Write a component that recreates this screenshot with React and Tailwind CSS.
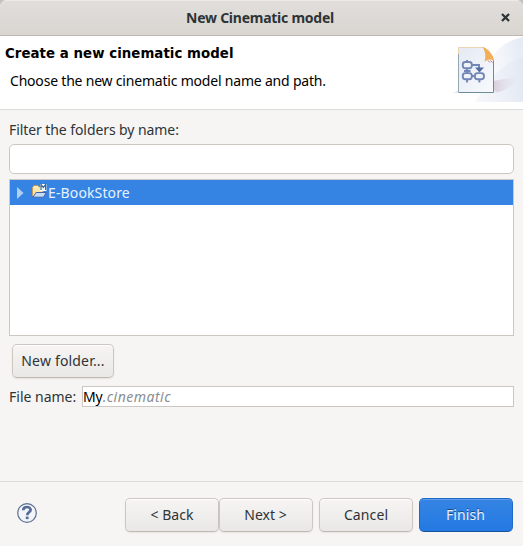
import React from "react";

const BUTTON =
  "box-border flex h-[34px] shrink-0 items-center justify-center rounded-[5px] border border-[#cdc7c2] border-b-[#bfb8b1] bg-linear-to-b from-[#f6f5f4] to-[#e9e8e6] text-[#2e3436] shadow-[inset_0_1px_#ffffff,0_1px_2px_rgba(0,0,0,0.07)]";

function WizardBanner() {
  return (
    <svg width="78" height="66" viewBox="0 0 78 66" className="block shrink-0">
      <defs>
        <linearGradient id="sweep" x1="0" y1="0.5" x2="1" y2="0.3">
          <stop offset="0.2" stopColor="#fff" />
          <stop offset="0.7" stopColor="#f3f5fa" />
          <stop offset="1" stopColor="#e6ebf5" />
        </linearGradient>
        <linearGradient id="lower" x1="0" y1="0" x2="1" y2="0">
          <stop offset="0" stopColor="#f5f6fa" />
          <stop offset="1" stopColor="#e1e7f3" />
        </linearGradient>
        <linearGradient id="page" x1="0" y1="0" x2="1" y2="1">
          <stop offset="0" stopColor="#e4e9f3" />
          <stop offset="1" stopColor="#f8fafd" />
        </linearGradient>
        <linearGradient id="shade" x1="0" y1="0" x2="1" y2="0">
          <stop offset="0" stopColor="#d8ccd8" />
          <stop offset="1" stopColor="#e7eaf4" stopOpacity="0" />
        </linearGradient>
      </defs>
      <path d="M78 1C62 4 53 12 44 25C34 41 22 51 8 57L16 66H78Z" fill="url(#sweep)" />
      <path d="M78 21C63 25 52 35 42 48L30 66H78Z" fill="url(#lower)" opacity="0.75" />
      <path d="M48 45L77 40C69 50 59 56 48 57Z" fill="url(#shade)" />
      <path d="M8 57L14 54H49L54 57Z" fill="#e5e8f1" />
      <path d="M13 11H39L49 24V57H13Z" fill="url(#page)" />
      <path d="M13.5 56V11.5H39" fill="none" stroke="#e9d6b0" />
      <path d="M48.5 24V56.5H13.5" fill="none" stroke="#6d8b98" />
      <path d="M13.5 18V56" fill="none" stroke="#93a8b1" />
      <path d="M37.5 11C42 11.5 49 19 49 25C46 23 43 23 39.5 26C41 20 40.5 16 37.5 11Z" fill="#f5ae58" />
      <path d="M43 24.5L45 26.5M45.5 24.5L47.5 26.5" stroke="#ce7474" />
      <g fill="#eef2f9" stroke="#7186b5" strokeWidth="1.9">
        <path d="M22 24V27M22 33V37M22 43V46.5M27 29H34V33M34.4 43V46.5M19 35H25.5M25.5 40H30" fill="none" />
        <rect x="17.8" y="26" width="9" height="6.2" rx="2.5" />
        <rect x="17.8" y="37.1" width="9" height="6.2" rx="2.5" />
        <rect x="29.9" y="37.1" width="9" height="6.2" rx="2.5" />
      </g>
      <path d="M30 31.5H39L34.5 36.5Z" fill="#536da5" />
    </svg>
  );
}

function ProjectIcon() {
  return (
    <svg width="16" height="16" viewBox="0 0 16 16" className="block shrink-0">
      <path d="M1.5 13V4.5L3 2.5H7L8 4H12V12" fill="#fff0be" stroke="#c7975c" />
      <path d="M3 5H11V9H5L2 13Z" fill="#fce6a8" />
      <path d="M5 9.5H15.3L12.5 14.2H2Z" fill="#c4dcfc" stroke="#47639f" />
      <path d="M9 1H15.5V8H9Z" fill="#f6fbff" />
      <path d="M10 7V1.4L12.3 4.5L14.6 1.4V7" fill="none" stroke="#356c91" strokeWidth="1.2" />
    </svg>
  );
}

function HelpIcon() {
  return (
    <svg width="20" height="20" viewBox="0 0 20 20" className="block">
      <circle cx="10" cy="10" r="9.3" fill="#f2f4f7" stroke="#5b6f94" strokeWidth="1.2" />
      <path d="M6.3 7.3C6.3 2.9 13.7 3.1 13.6 6.9C13.5 9.4 10.3 9.2 10.2 12.2" fill="none" stroke="#566b96" strokeWidth="2.7" />
      <rect x="8.8" y="13.6" width="2.8" height="2.5" fill="#566b96" />
    </svg>
  );
}

export default function App() {
  return (
    <div className="h-[546px] w-[523px] bg-[#c4c1be]">
    <div className="flex h-[546px] w-[523px] flex-col overflow-hidden rounded-t-[7px] bg-[#f6f5f4] font-['Noto_Sans',sans-serif] text-[14px] leading-[20px] text-[#2e3436]">
      <header className="grid h-[36px] shrink-0 grid-cols-[32px_1fr_35px] items-center border-b border-[#bfb8b1] bg-linear-to-b from-[#e1dedb] to-[#d9d5d1] shadow-[inset_0_1px_#eceae8]">
        <span />
        <h1 className="text-center text-[14px] font-bold tracking-[-0.25px]">New Cinematic model</h1>
        <button aria-label="Close" className="flex items-center justify-center">
          <svg width="9" height="9" viewBox="0 0 9 9">
            <path d="M1 1L8 8M8 1L1 8" stroke="#2e3436" strokeWidth="2.3" />
          </svg>
        </button>
      </header>

      <section className="flex h-[74px] shrink-0 justify-between border-b border-[#dcdcda] bg-white text-black">
        <div className="pt-[8px] pl-[5px] whitespace-nowrap">
          <h2 className="font-['DejaVu_Sans',sans-serif] text-[13.33px] font-bold tracking-[0.05px]">Create a new cinematic model</h2>
          <p className="mt-[7px] pl-[5px] tracking-[-0.2px]">Choose the new cinematic model name and path.</p>
        </div>
        <WizardBanner />
      </section>

      <main className="flex h-[371px] shrink-0 flex-col px-[9px] pt-[10px]">
        <label htmlFor="filter" className="h-[24px] tracking-[-0.08px]">Filter the folders by name:</label>
        <input id="filter" className="h-[30px] w-[505px] shrink-0 rounded-[5px] border border-[#cdc7c2] bg-white px-2 outline-none" />
        <div className="mt-[5px] h-[157px] w-[505px] shrink-0 border border-[#cdc7c2] bg-white">
          <div className="flex h-[25px] items-center bg-[#3584e4] text-[#e8f1fc]">
            <svg width="7" height="12" viewBox="0 0 7 12" className="ml-[7px] shrink-0">
              <path d="M0 0L6.5 6L0 12Z" fill="#aecef4" />
            </svg>
            <span className="mr-px ml-[7px] -mt-[4px]"><ProjectIcon /></span>
            <span className="tracking-[0.13px]">E-BookStore</span>
          </div>
        </div>
        <button className={`${BUTTON} mt-[8px] ml-[3px] w-[102px]`}><span className="tracking-[0.18px]">New folder...</span></button>
        <div className="mt-[8px] flex h-[21px] items-center">
          <label className="w-[73px] shrink-0 whitespace-nowrap">File name:</label>
          <div className="flex h-[21px] w-[432px] items-center border border-[#cdc7c2] bg-white text-black">
            <span className="tracking-[-0.1px]">My</span><em className="tracking-[0.5px] text-[#8b8e8f]">.cinematic</em>
          </div>
        </div>
      </main>

      <footer className="flex h-[65px] shrink-0 border-t border-[#dcdcda] pt-[16px] pl-[17px]">
        <button aria-label="Help" className="mt-[5px] mr-[88px] h-[20px] w-[20px] shrink-0"><HelpIcon /></button>
        <button className={`${BUTTON} w-[94px]`}><span>&lt; Back</span></button>
        <button className={`${BUTTON} w-[94px]`}><span className="-ml-px">Next &gt;</span></button>
        <button className={`${BUTTON} ml-[6px] w-[94px]`}><span className="tracking-[0.1px]">Cancel</span></button>
        <button className="ml-[6px] flex h-[34px] w-[94px] shrink-0 items-center justify-center rounded-[5px] border border-[#1b6acb] border-b-[#15539e] bg-linear-to-b from-[#3584e4] to-[#2379e2] text-[#e8f1fc] shadow-[inset_0_1px_#5d9de9] [text-shadow:0_-1px_rgba(0,0,0,0.45)]"><span className="-ml-px tracking-[0.1px]">Finish</span></button>
      </footer>
    </div>
    </div>
  );
}
